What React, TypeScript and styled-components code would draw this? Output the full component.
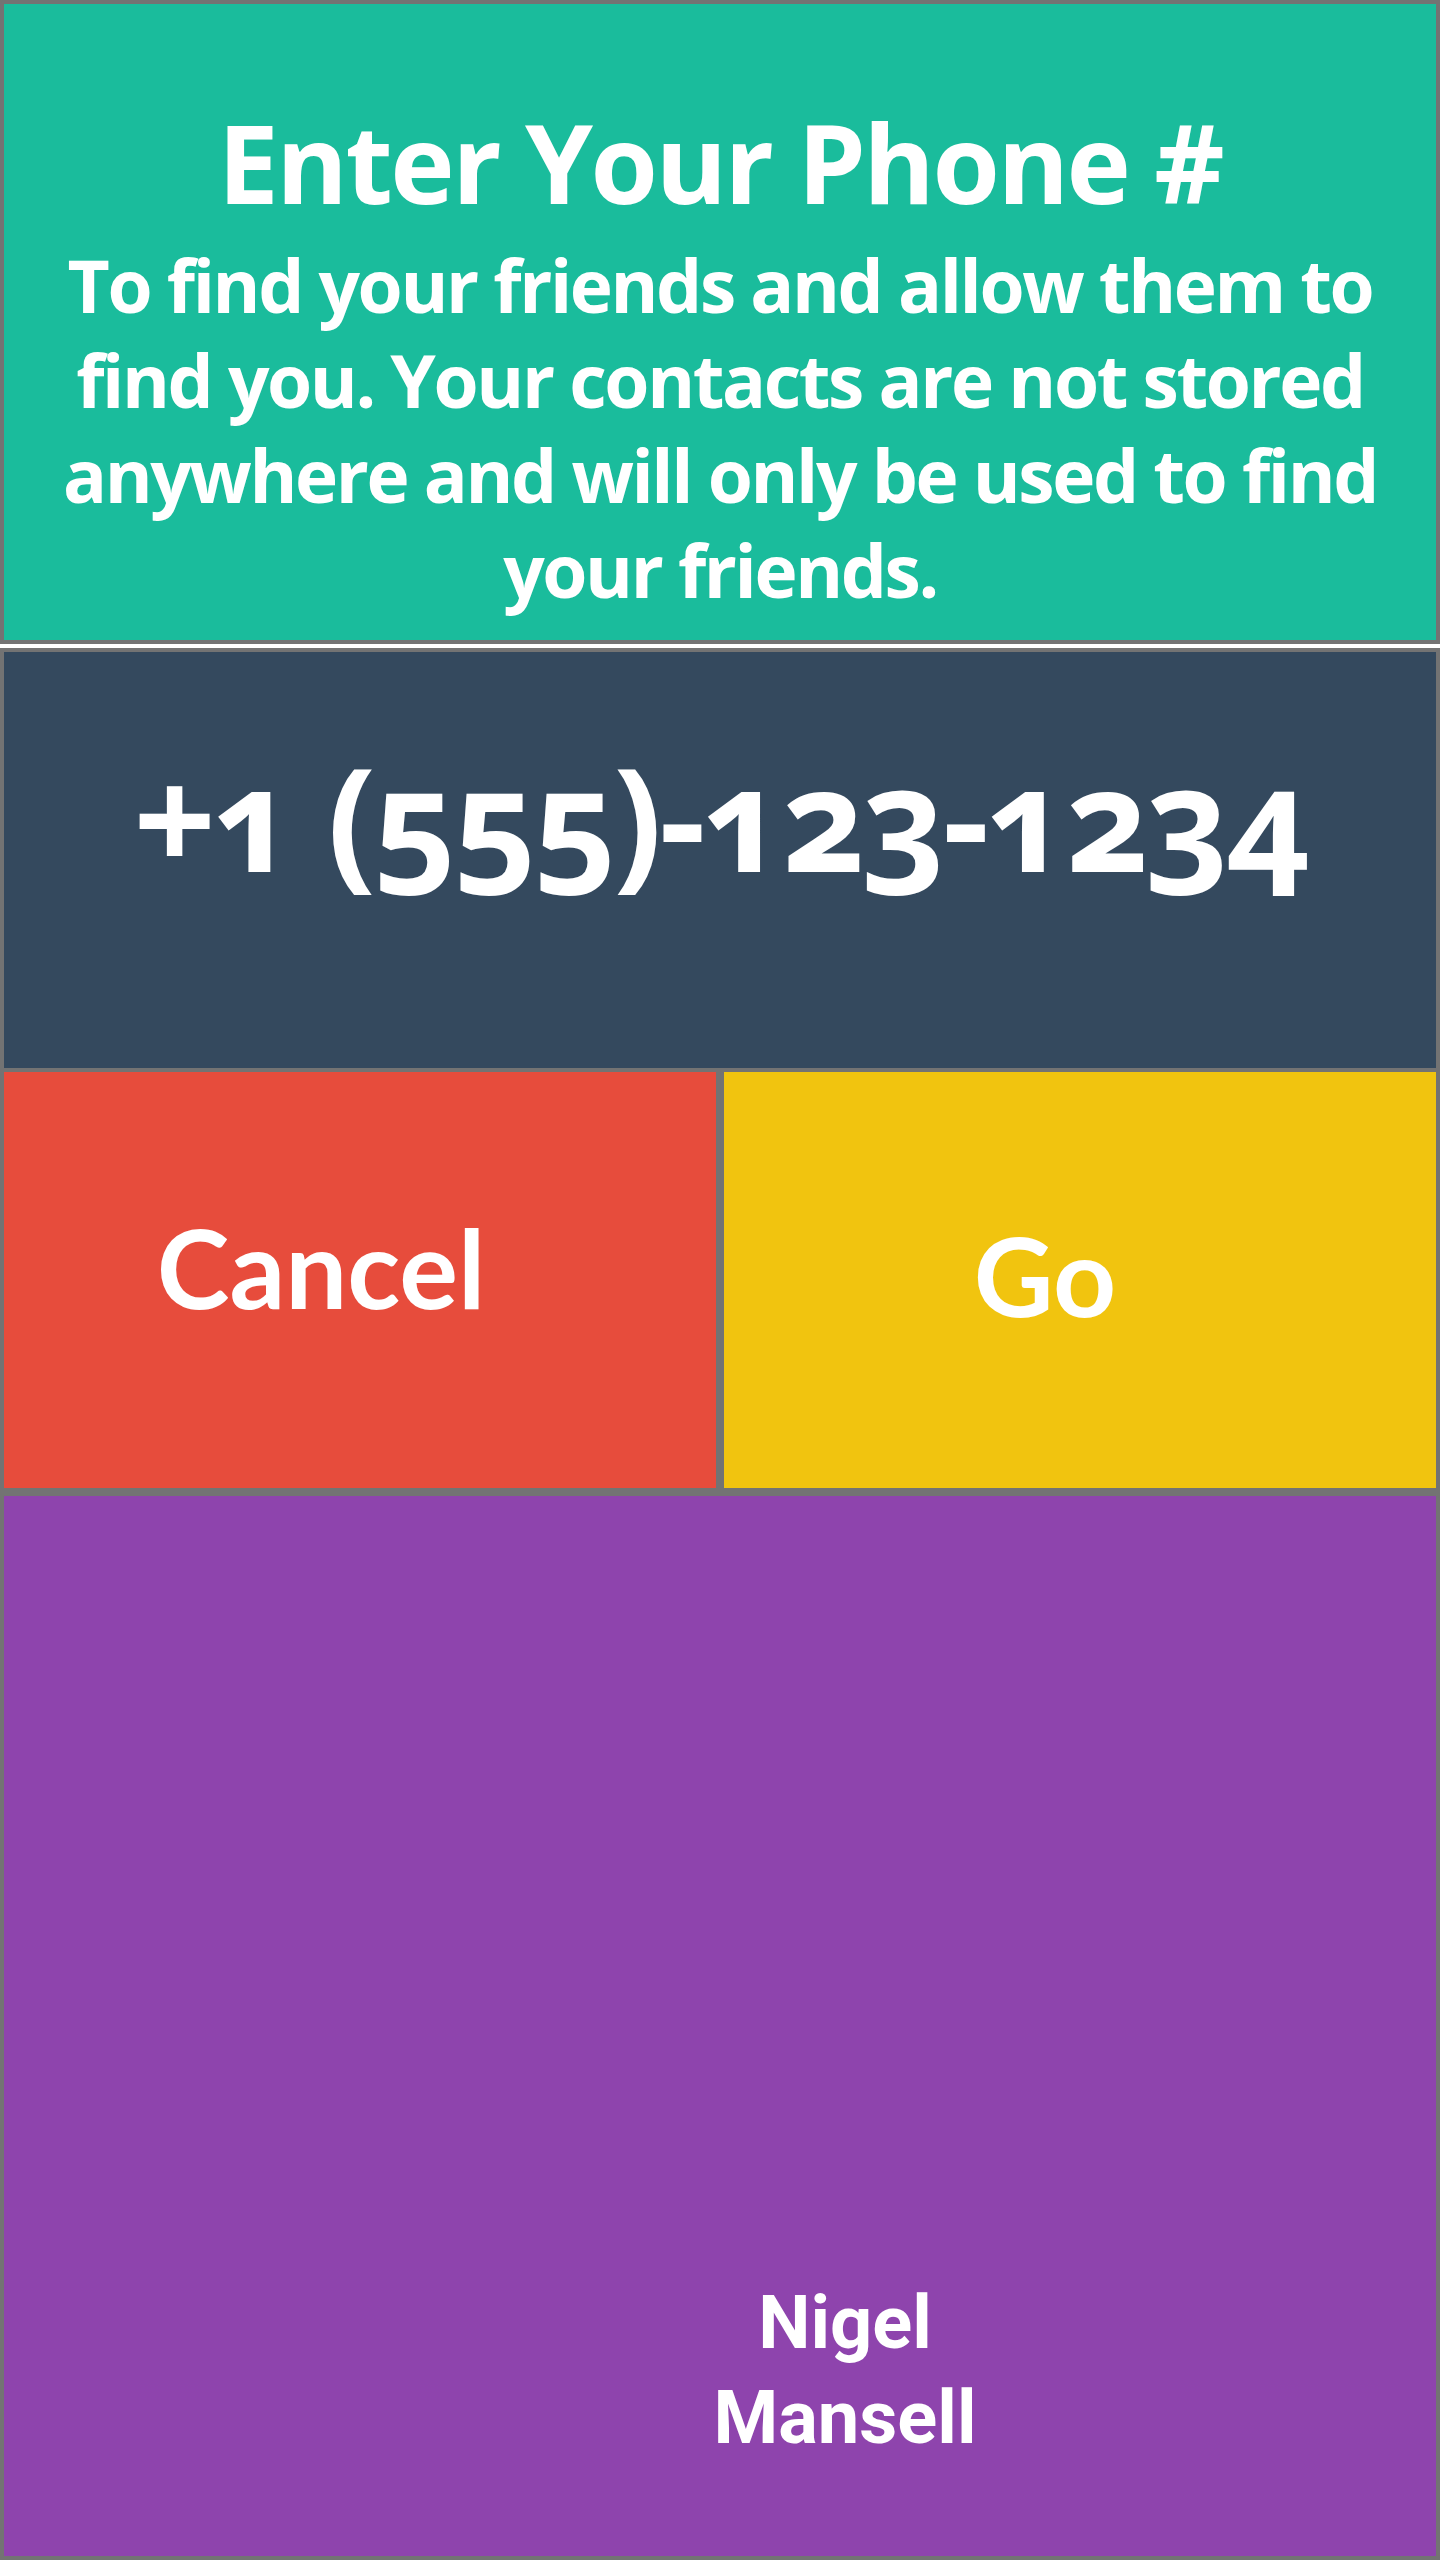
import React from "react";
import styled, { createGlobalStyle } from "styled-components";

const GlobalStyle = createGlobalStyle`
  html, body {
    margin: 0;
    padding: 0;
    background: #ffffff;
  }
  * { box-sizing: border-box; }
`;

const BORDER = "#737373";

const Page = styled.div`
  width: 1440px;
  display: flex;
  flex-direction: column;
  font-family: "Open Sans", "Noto Sans", sans-serif;
  color: #ffffff;
`;

const Header = styled.header`
  height: 644px;
  background: #1abc9c;
  border: 4px solid ${BORDER};
  padding-top: 103px;
  display: flex;
  flex-direction: column;
  align-items: center;
  text-align: center;
`;

const Title = styled.h1`
  margin: 0;
  font-size: 109px;
  line-height: 1;
  font-weight: 700;
  letter-spacing: -2.5px;
`;

const Subtitle = styled.p`
  margin: 21px 0 0;
  font-size: 73px;
  line-height: 95px;
  font-weight: 700;
  letter-spacing: -2.4px;
`;

const PhonePanel = styled.section`
  margin-top: 4px;
  height: 420px;
  background: #34495e;
  border: 4px solid ${BORDER};
  border-bottom: 0;
  display: flex;
  align-items: center;
  justify-content: center;
  padding-bottom: 88px;
`;

const PhoneNumber = styled.div`
  font-size: 144px;
  font-weight: 700;
  line-height: 1;
  letter-spacing: -3px;
  font-variant-numeric: oldstyle-nums;
`;

const ButtonRow = styled.div`
  display: grid;
  grid-template-columns: 1fr 1fr;
`;

const ActionButton = styled.button<{ $bg: string; $padRight: number; $padBottom: number }>`
  height: 424px;
  border: 4px solid ${BORDER};
  background: ${(p) => p.$bg};
  color: #ffffff;
  font-family: Lato, "Open Sans", sans-serif;
  font-size: 110px;
  font-weight: 700;
  line-height: 1.2;
  display: flex;
  align-items: center;
  justify-content: center;
  padding: 0 ${(p) => p.$padRight}px ${(p) => p.$padBottom}px 0;
  cursor: pointer;
`;

const FriendsPanel = styled.section`
  height: 1068px;
  background: #8e44ad;
  border: 4px solid ${BORDER};
  display: flex;
  align-items: flex-end;
  justify-content: center;
  padding: 0 0 91px 250px;
`;

const FriendName = styled.div`
  font-family: Roboto, "Open Sans", sans-serif;
  font-size: 74px;
  font-weight: 700;
  line-height: 95px;
  text-align: center;
`;

export default function App() {
  return (
    <Page>
      <GlobalStyle />
      <Header>
        <Title>Enter Your Phone #</Title>
        <Subtitle>
          To find your friends and allow them to
          <br />
          find you. Your contacts are not stored
          <br />
          anywhere and will only be used to find
          <br />
          your friends.
        </Subtitle>
      </Header>
      <PhonePanel>
        <PhoneNumber>+1 (555)-123-1234</PhoneNumber>
      </PhonePanel>
      <ButtonRow>
        <ActionButton $bg="#e74c3c" $padRight={78} $padBottom={29}>
          Cancel
        </ActionButton>
        <ActionButton $bg="#f1c40f" $padRight={70} $padBottom={13}>
          Go
        </ActionButton>
      </ButtonRow>
      <FriendsPanel>
        <FriendName>
          Nigel
          <br />
          Mansell
        </FriendName>
      </FriendsPanel>
    </Page>
  );
}
